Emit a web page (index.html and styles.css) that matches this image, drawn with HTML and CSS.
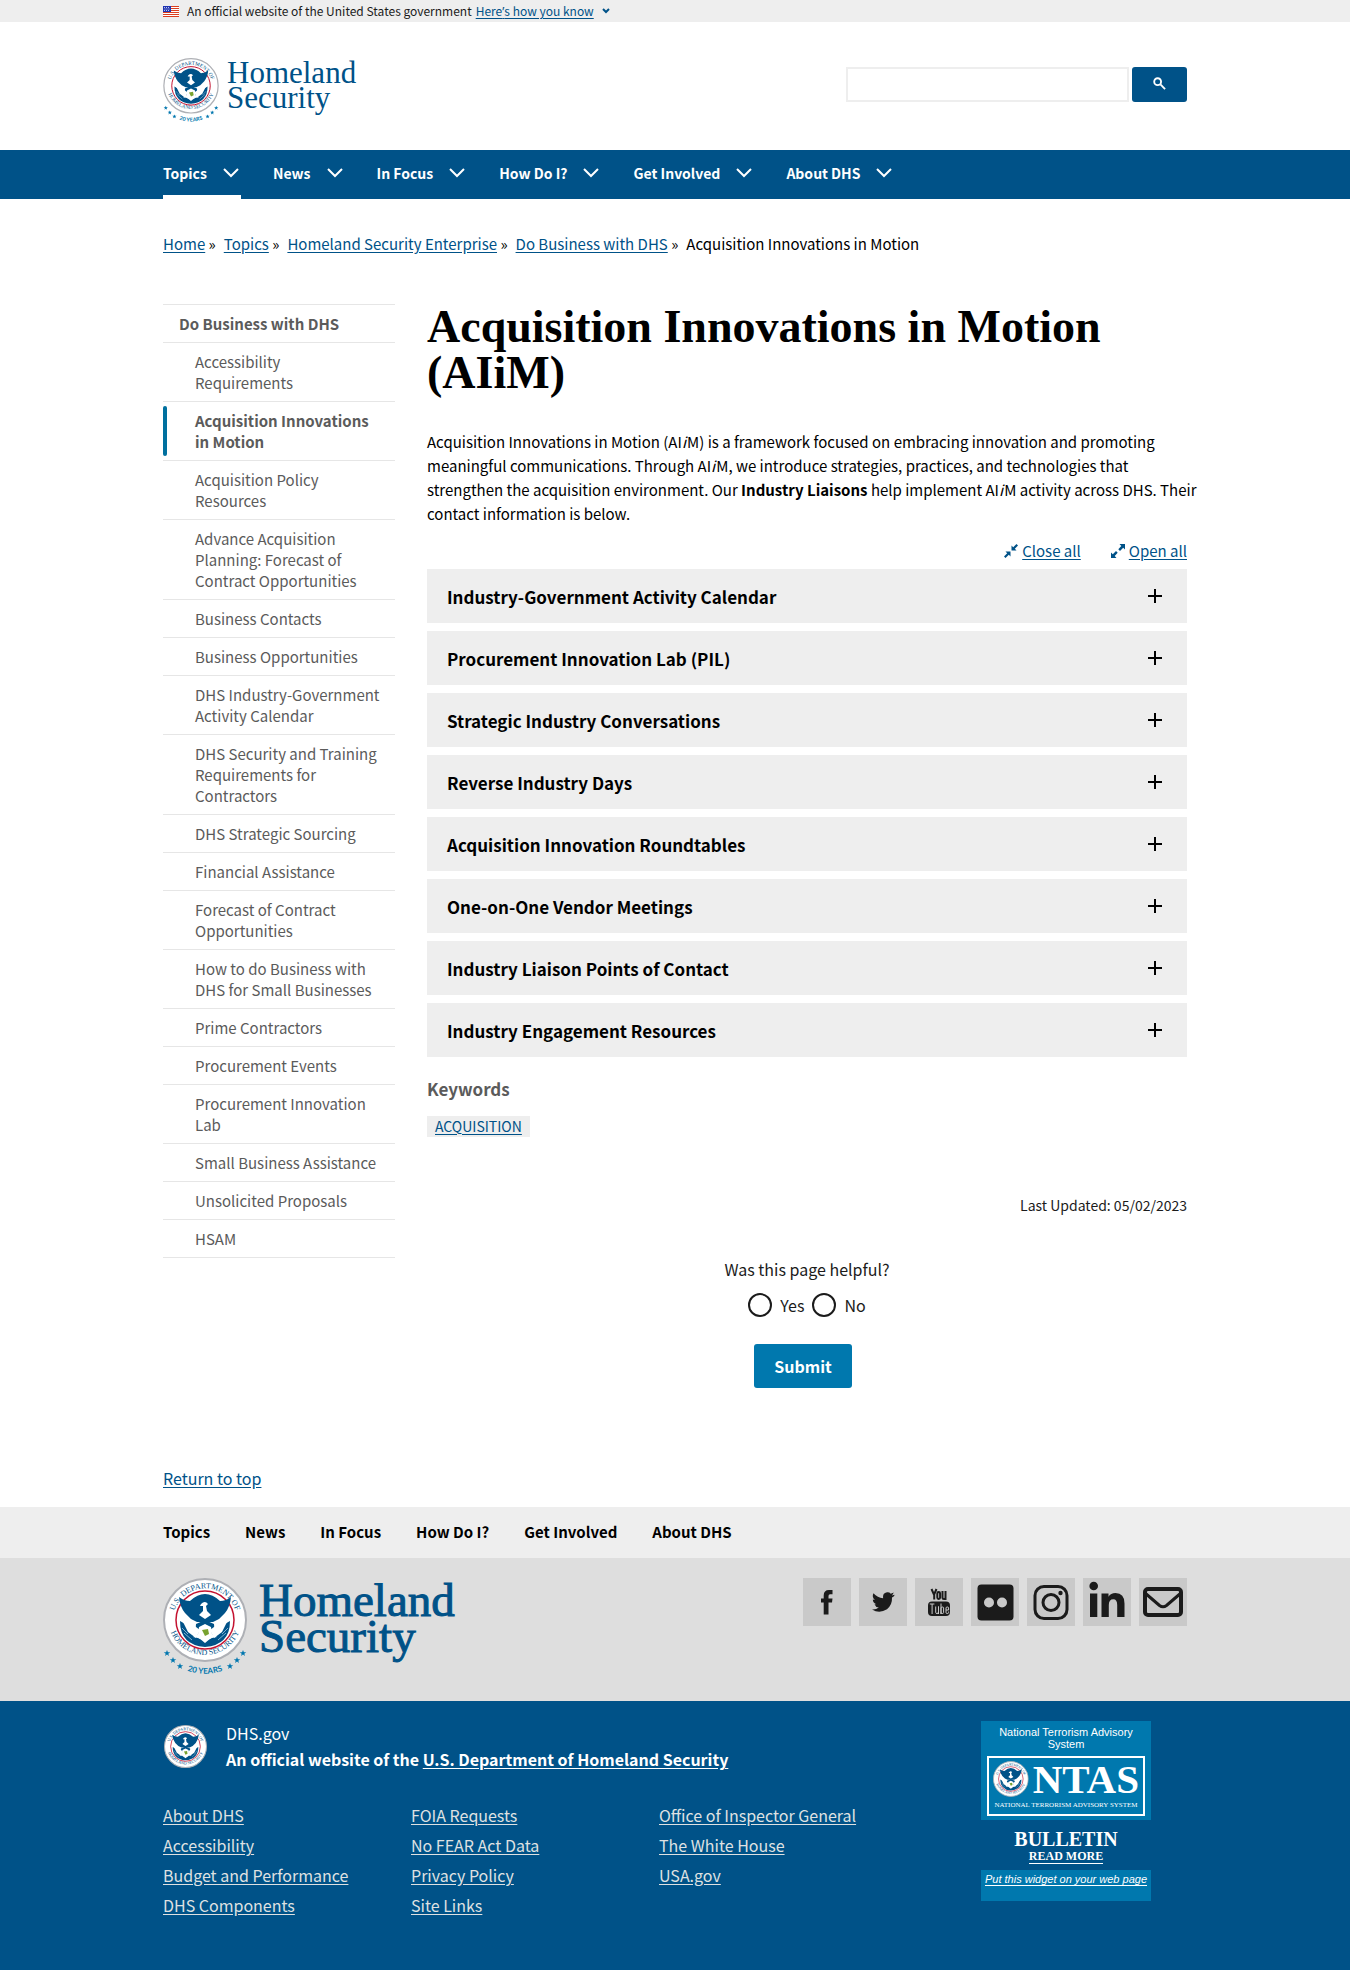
FILE: index.html
```html
<!DOCTYPE html>
<html lang="en">
<head>
<meta charset="utf-8">
<meta name="viewport" content="width=device-width, initial-scale=1">
<title>Acquisition Innovations in Motion (AIiM) | Homeland Security</title>
<link rel="stylesheet" href="styles.css">
</head>
<body id="top">
<svg class="defs" aria-hidden="true">
  <symbol id="seal" viewBox="0 0 84 84">
    <circle cx="42" cy="42" r="41" fill="#fff" stroke="#aeb0b5" stroke-width="2"/>
    <path id="arc-top" d="M10.500 48A32 32 0 1 1 73.500 48" fill="none"/>
    <path id="arc-bottom" d="M5 40A37 37 0 0 0 79 40" fill="none"/>
    <text class="seal-text"><textPath href="#arc-top" startOffset="50%">U.S. DEPARTMENT OF</textPath></text>
    <text class="seal-text"><textPath href="#arc-bottom" startOffset="50%">HOMELAND SECURITY</textPath></text>
    <circle cx="42" cy="42" r="29" fill="#fff" stroke="#c41230" stroke-width="1.500"/>
    <path d="M16 19Q21 23 27 23Q42 9 57 23Q63 23 68 19Q67 29 62 35L56 41L50 44H34L28 41L22 35Q17 29 16 19Z" fill="#005288"/>
    <path d="M38 26Q42 22 45 26L43 28L44 33L48 37L42 41L36 37L40 33V28L37 28Z" fill="#fff"/>
    <path d="M17 43Q17 67 42 69Q67 67 67 43L60 47L52 58Q42 66 32 58L24 47Z" fill="#005288"/>
    <path d="M33 46L42 42L51 46L52 57Q42 65 32 57Z" fill="#005288"/>
    <path d="M17 38L26 42L33 49L37 52L33 60L25 54ZM67 38L58 42L51 49L47 52L51 60L59 54Z" fill="#fff"/>
    <path d="M36 49L42 46L48 49L49 56L54 59L48 60L42 65L36 60L30 59L35 56Z" fill="#fff"/>
    <path d="M39 52L45 51L46 56L42 58Z" fill="#78a22f"/>
    <path d="M21 55L29 62M19 50L25 56M63 55L55 62M65 50L59 56" stroke="#7fb0d0" stroke-width="1"/>
  </symbol>
  <symbol id="anniversary" viewBox="0 0 84 98">
    <use href="#seal" width="84" height="84"/>
    <path id="arc-years" d="M-2 73A54 54 0 0 0 86 73" fill="none"/>
    <g fill="#0076ae">
      <path id="star" d="M4 72L4.900 74.200H7.200L5.300 75.700L6 78L4 76.600L2 78L2.700 75.700L.8 74.200H3.100Z"/>
      <use href="#star" x="6" y="7"/><use href="#star" x="13" y="13"/>
      <use href="#star" x="63" y="13"/><use href="#star" x="70" y="7"/><use href="#star" x="76"/>
      <text class="years-text"><textPath href="#arc-years" startOffset="50%">20 YEARS</textPath></text>
    </g>
  </symbol>
  <symbol id="chevron" viewBox="0 0 16 10"><path d="M1 1L8 8L15 1" fill="none" stroke="currentColor" stroke-width="2"/></symbol>
  <symbol id="plus" viewBox="0 0 14 14"><path d="M7 0V14M0 7H14" stroke="#000" stroke-width="2"/></symbol>
</svg>

<div class="banner">
  <div class="container banner-row">
    <svg class="flag" viewBox="0 0 16 11" aria-hidden="true"><path fill="#fff" d="M0 0H16V11H0Z"/><path d="M0 .5H16M0 2.500H16M0 4.500H16M0 6.500H16M0 8.500H16M0 10.500H16" stroke="#db3e1f"/><path fill="#1e33b1" d="M0 0H8V6H0Z"/><path d="M1 1.500H7M1.500 3H7M1 4.500H7" stroke="#fff" stroke-width=".7" stroke-dasharray="1 1"/></svg>
    <span>An official website of the United States government</span>
    <a href="#how">Here<span class="apostrophe">’</span>s how you know</a>
    <svg class="banner-chevron" viewBox="0 0 8 6" aria-hidden="true"><path d="M1 1L4 4L7 1"/></svg>
  </div>
</div>

<header>
  <div class="container masthead">
    <a class="logo" href="#top"><svg class="logo-seal" aria-hidden="true"><use href="#anniversary"/></svg><span class="logo-name">Homeland<br>Security</span></a>
    <form class="search" role="search">
      <input type="search" aria-label="Search DHS.gov">
      <button type="button" aria-label="Search"><svg viewBox="0 0 14 14" aria-hidden="true"><circle cx="5" cy="5" r="3.700"/><path d="M8 8L13 13"/></svg></button>
    </form>
  </div>
  <nav class="primary" aria-label="Primary">
    <ul class="container">
      <li class="current"><a href="#topics">Topics<svg aria-hidden="true"><use href="#chevron"/></svg></a></li>
      <li><a href="#news">News<svg aria-hidden="true"><use href="#chevron"/></svg></a></li>
      <li><a href="#focus">In Focus<svg aria-hidden="true"><use href="#chevron"/></svg></a></li>
      <li><a href="#how-do-i">How Do I?<svg aria-hidden="true"><use href="#chevron"/></svg></a></li>
      <li><a href="#involved">Get Involved<svg aria-hidden="true"><use href="#chevron"/></svg></a></li>
      <li><a href="#about">About DHS<svg aria-hidden="true"><use href="#chevron"/></svg></a></li>
    </ul>
  </nav>
</header>

<div class="container">
  <nav aria-label="Breadcrumb">
    <ol class="breadcrumb">
      <li><a href="#home">Home</a> »</li>
      <li><a href="#topics">Topics</a> »</li>
      <li><a href="#enterprise">Homeland Security Enterprise</a> »</li>
      <li><a href="#business">Do Business with DHS</a> »</li>
      <li>Acquisition Innovations in Motion</li>
    </ol>
  </nav>

  <div class="columns">
    <nav class="sidenav" aria-label="Section">
      <a class="sidenav-title" href="#business">Do Business with DHS</a>
      <ul>
        <li><a href="#s1">Accessibility Requirements</a></li>
        <li><a class="active" href="#s2">Acquisition Innovations in Motion</a></li>
        <li><a href="#s3">Acquisition Policy Resources</a></li>
        <li><a href="#s4">Advance Acquisition Planning: Forecast of Contract Opportunities</a></li>
        <li><a href="#s5">Business Contacts</a></li>
        <li><a href="#s6">Business Opportunities</a></li>
        <li><a href="#s7">DHS Industry-Government Activity Calendar</a></li>
        <li><a href="#s8">DHS Security and Training Requirements for Contractors</a></li>
        <li><a href="#s9">DHS Strategic Sourcing</a></li>
        <li><a href="#s10">Financial Assistance</a></li>
        <li><a href="#s11">Forecast of Contract Opportunities</a></li>
        <li><a href="#s12">How to do Business with DHS for Small Businesses</a></li>
        <li><a href="#s13">Prime Contractors</a></li>
        <li><a href="#s14">Procurement Events</a></li>
        <li><a href="#s15">Procurement Innovation Lab</a></li>
        <li><a href="#s16">Small Business Assistance</a></li>
        <li><a href="#s17">Unsolicited Proposals</a></li>
        <li><a href="#s18">HSAM</a></li>
      </ul>
    </nav>

    <main>
      <h1>Acquisition Innovations in Motion (AIiM)</h1>
      <p class="intro">Acquisition Innovations in Motion (AI<em>i</em>M) is a framework focused on embracing innovation and promoting meaningful communications. Through AI<em>i</em>M, we introduce strategies, practices, and technologies that strengthen the acquisition environment. Our <strong>Industry Liaisons</strong> help implement AI<em>i</em>M activity across DHS. Their contact information is below.</p>
      <div class="toggle-all">
        <a href="#close"><svg viewBox="0 0 14 14" aria-hidden="true"><path d="M7.500 1.500V6.500H12.500L10.800 4.800L14 1.500L12.500 0L9.200 3.200ZM6.500 12.500V7.500H1.500L3.200 9.200L0 12.500L1.500 14L4.800 10.800Z"/></svg><span>Close all</span></a>
        <a href="#open"><svg viewBox="0 0 14 14" aria-hidden="true"><path d="M8.500 0H14V5.500L12.200 3.800L9 7L7.300 5.200L10.300 1.900ZM5.500 14H0V8.500L1.800 10.200L5 7L6.700 8.800L3.700 12.100Z"/></svg><span>Open all</span></a>
      </div>
      <div class="accordion">
        <button type="button" aria-expanded="false">Industry-Government Activity Calendar<svg aria-hidden="true"><use href="#plus"/></svg></button>
        <button type="button" aria-expanded="false">Procurement Innovation Lab (PIL)<svg aria-hidden="true"><use href="#plus"/></svg></button>
        <button type="button" aria-expanded="false">Strategic Industry Conversations<svg aria-hidden="true"><use href="#plus"/></svg></button>
        <button type="button" aria-expanded="false">Reverse Industry Days<svg aria-hidden="true"><use href="#plus"/></svg></button>
        <button type="button" aria-expanded="false">Acquisition Innovation Roundtables<svg aria-hidden="true"><use href="#plus"/></svg></button>
        <button type="button" aria-expanded="false">One-on-One Vendor Meetings<svg aria-hidden="true"><use href="#plus"/></svg></button>
        <button type="button" aria-expanded="false">Industry Liaison Points of Contact<svg aria-hidden="true"><use href="#plus"/></svg></button>
        <button type="button" aria-expanded="false">Industry Engagement Resources<svg aria-hidden="true"><use href="#plus"/></svg></button>
      </div>
      <h2>Keywords</h2>
      <ul class="tags"><li><a href="#acquisition">ACQUISITION</a></li></ul>
      <p class="updated">Last Updated: 05/02/2023</p>
      <form class="feedback">
        <fieldset>
          <legend>Was this page helpful?</legend>
          <div class="choices">
            <label><input type="radio" name="helpful" value="yes">Yes</label>
            <label><input type="radio" name="helpful" value="no">No</label>
          </div>
        </fieldset>
        <button type="button">Submit</button>
      </form>
    </main>
  </div>
  <p class="return"><a href="#top">Return to top</a></p>
</div>

<footer>
  <nav class="footer-nav" aria-label="Footer">
    <ul class="container">
      <li><a href="#topics">Topics</a></li>
      <li><a href="#news">News</a></li>
      <li><a href="#focus">In Focus</a></li>
      <li><a href="#how-do-i">How Do I?</a></li>
      <li><a href="#involved">Get Involved</a></li>
      <li><a href="#about">About DHS</a></li>
    </ul>
  </nav>
  <div class="footer-brand">
    <div class="container footer-brand-row">
      <a class="logo logo-large" href="#top"><svg class="logo-seal" aria-hidden="true"><use href="#anniversary"/></svg><span class="logo-name">Homeland<br>Security</span></a>
      <ul class="social">
        <li><a href="#facebook" aria-label="Facebook"><svg viewBox="0 0 48 48"><path d="M29.500 12V16.300H27Q25.500 16.300 25.500 18V20.500H29.500L29 24.500H25.500V36.500H20.700V24.500H18V20.500H20.700V17.500Q20.700 12 26 12Z"/></svg></a></li>
        <li><a href="#twitter" aria-label="Twitter"><svg viewBox="0 0 48 48"><path d="M35.500 17.200Q34.500 18.800 33 19.600Q33.400 27 28 31.200Q20.500 36 13 31.500Q17 31.800 19.800 29.600Q16.500 29.200 15.500 26.300L17.500 26.200Q14 25 13.800 21.400L15.900 22Q12.500 19 14.500 15.300Q18.500 20 24.100 20.300Q23.300 15 28 14.300Q30.300 14 31.800 15.700L34.700 14.600Q34.200 16.400 32.900 17.400L35.500 16.800Z"/></svg></a></li>
        <li><a href="#youtube" aria-label="YouTube"><svg viewBox="0 0 48 48"><path d="M16.500 11L19.200 17V21.500M21.500 11L18.900 17" class="line-thin"/><rect x="22.300" y="14" width="2.800" height="7" rx="1.400" class="line-thin"/><path d="M27.500 13V19.500Q27.500 21 29 21Q30.500 21 30.500 19.500V13V22" class="line-thin"/><rect x="13" y="23.500" width="22" height="14.500" rx="4"/><g class="line-light"><path d="M14.800 26H19.400M17.100 26V36"/><path d="M20.700 28.500V34.500Q20.700 35.500 22 35.500Q23.500 35.500 23.500 34V28.500V36"/><path d="M26 25.500V36V30Q26 29 27.300 29Q28.600 29 28.600 30V34.500Q28.600 35.500 27.300 35.500Q26 35.500 26 34.500"/><path d="M31 32H33.600V30Q33.600 29 32.300 29Q31 29 31 30V34.500Q31 35.500 32.300 35.500Q33.600 35.500 33.600 34.500V33.500"/></g></svg></a></li>
        <li><a href="#flickr" aria-label="Flickr"><svg viewBox="0 0 48 48"><rect x="6.500" y="6.500" width="36" height="36" rx="4"/><g fill="#c9c9c9"><circle cx="18" cy="24.500" r="5"/><circle cx="31" cy="24.500" r="5"/></g></svg></a></li>
        <li><a href="#instagram" aria-label="Instagram"><svg viewBox="0 0 48 48"><rect x="8" y="8.500" width="32" height="32" rx="9" class="line"/><circle cx="24" cy="24.500" r="8" class="line"/><circle cx="33.500" cy="15" r="2.200"/></svg></a></li>
        <li><a href="#linkedin" aria-label="LinkedIn"><svg viewBox="0 0 48 48"><circle cx="10.700" cy="8" r="4.300"/><path d="M7 15.500H14.300V39H7ZM18.500 15.500H25.500V18.700Q27.700 15 32.500 15Q41.500 15 41.500 25.500V39H34.200V27Q34.200 21.300 30.300 21.300Q25.800 21.300 25.800 27V39H18.500Z"/></svg></a></li>
        <li><a href="#email" aria-label="Email"><svg viewBox="0 0 48 48"><rect x="6" y="11" width="36" height="26" rx="3" class="line-thick"/><path d="M6 15L20.500 27.500Q24 30 27.500 27.500L42 15" class="line"/></svg></a></li>
      </ul>
    </div>
  </div>
  <div class="footer-base">
    <div class="container footer-base-row">
      <div class="footer-main">
        <div class="identity">
          <svg aria-hidden="true"><use href="#seal"/></svg>
          <div><p>DHS.gov</p><p><strong>An official website of the <a href="#dhs">U.S. Department of Homeland Security</a></strong></p></div>
        </div>
        <ul class="footer-links">
          <li><a href="#f1">About DHS</a></li>
          <li><a href="#f2">Accessibility</a></li>
          <li><a href="#f3">Budget and Performance</a></li>
          <li><a href="#f4">DHS Components</a></li>
          <li><a href="#f5">FOIA Requests</a></li>
          <li><a href="#f6">No FEAR Act Data</a></li>
          <li><a href="#f7">Privacy Policy</a></li>
          <li><a href="#f8">Site Links</a></li>
          <li><a href="#f9">Office of Inspector General</a></li>
          <li><a href="#f10">The White House</a></li>
          <li><a href="#f11">USA.gov</a></li>
        </ul>
      </div>
      <aside class="ntas">
        <div class="ntas-head">
          <p>National Terrorism Advisory System</p>
          <div class="ntas-box">
            <div class="ntas-name"><svg aria-hidden="true"><use href="#seal"/></svg><span>NTAS</span></div>
            <small>NATIONAL TERRORISM ADVISORY SYSTEM</small>
          </div>
        </div>
        <a class="ntas-bulletin" href="#bulletin"><strong>BULLETIN</strong><span>READ MORE</span></a>
        <a class="ntas-widget" href="#widget">Put this widget on your web page</a>
      </aside>
    </div>
  </div>
</footer>
</body>
</html>
```
FILE: styles.css
```css
:root {
  --blue: #005288;
  --bright: #0078ae;
  --ink: #1b1b1b;
  --pale: #eee;
  --sans: "Noto Sans CJK SC", "Source Sans Pro", sans-serif;
  --serif: "Liberation Serif", serif;
}

* { box-sizing: border-box; }

body {
  margin: 0;
  background: #fff;
  color: #000;
  font: 15px/24px var(--sans);
}

a { color: var(--blue); text-underline-offset: 2px; }
ul, ol { list-style: none; margin: 0; padding: 0; }
p { margin: 0; }
em { padding-right: 1px; }
button { font-family: inherit; border: 0; cursor: pointer; }

.defs { display: none; }
.seal-text { font: 8px var(--serif); fill: var(--blue); text-anchor: middle; }
.years-text { font: bold 8px "Lato", sans-serif; text-anchor: middle; }

.container { max-width: 1088px; margin: 0 auto; padding: 0 32px; }

/* Government banner */
.banner { background: var(--pale); font-size: 12px; line-height: 22px; color: var(--ink); }
.banner-row { display: flex; align-items: center; gap: 8px; }
.banner-row > span { margin-right: -4px; }
.apostrophe { font-family: "Noto Sans", sans-serif; line-height: 1; }
.flag { width: 16px; height: 11px; }
.banner-chevron { width: 8px; height: 6px; fill: none; stroke: var(--blue); stroke-width: 2; }

/* Masthead */
.masthead { display: flex; justify-content: space-between; align-items: flex-start; padding-top: 36px; padding-bottom: 27px; }
.logo { display: flex; gap: 8px; text-decoration: none; }
.logo-seal { width: 56px; height: 65px; }
.logo-name { font: 31px/25px var(--serif); padding-top: 2px; }
.search { display: flex; gap: 3px; margin-top: 9px; }
.search input { width: 283px; height: 35px; border: 2px solid #eee; padding: 0 8px; font: inherit; }
.search button { width: 55px; height: 35px; border-radius: 3px; background: var(--blue); }
.search svg { width: 13px; height: 13px; fill: none; stroke: #fff; stroke-width: 2; }

/* Primary navigation */
.primary { background: var(--blue); }
.primary ul { display: flex; gap: 32px; }
.primary a { display: flex; align-items: center; gap: 16px; height: 49px; padding-right: 2px; border: solid transparent; border-width: 0 0 4px; color: #fff; font-size: 14px; font-weight: bold; text-decoration: none; }
.primary .current a { border-color: #fff; }
.primary svg { width: 16px; height: 10px; }

/* Breadcrumb */
.breadcrumb { display: flex; flex-wrap: wrap; gap: 0 8px; padding: 33px 0 35px; }

/* Two-column body */
.columns { display: grid; grid-template-columns: 232px minmax(0, 1fr); gap: 32px; padding-top: 13px; }
.sidenav { line-height: 21px; border-top: 1px solid #e6e6e6; align-self: start; }
.sidenav a { display: block; color: #5b5b5b; text-decoration: none; }
.sidenav .sidenav-title { padding: 8px 16px; font-weight: bold; }
.sidenav li { border-top: 1px solid #e6e6e6; }
.sidenav ul { border-bottom: 1px solid #e6e6e6; }
.sidenav li a { position: relative; padding: 8px 14px 8px 32px; }
.sidenav .active { font-weight: bold; }
.sidenav .active::before { content: ""; position: absolute; left: 0; top: 4px; bottom: 4px; width: 4px; border-radius: 4px; background: #00709f; }

h1 { margin: 0 0 34px; font: bold 46px/46px var(--serif); }
.intro { margin-right: -16px; }
.toggle-all { display: flex; justify-content: flex-end; gap: 30px; margin: 13px 0 6px; }
.toggle-all a { display: flex; align-items: center; gap: 4px; text-decoration: none; }
.toggle-all span { text-decoration: underline; }
.toggle-all svg { width: 14px; height: 14px; fill: var(--blue); }

.accordion { display: grid; gap: 8px; }
.accordion button { display: flex; justify-content: space-between; align-items: center; height: 54px; padding: 0 25px 0 20px; background: var(--pale); color: #000; font-size: 17px; font-weight: bold; text-align: left; }
.accordion svg { width: 14px; height: 14px; }

h2 { margin: 20px 0 15px; font-size: 17px; line-height: 24px; color: #5b5b5b; }
.tags a { display: inline-block; padding: 0 8px; background: var(--pale); font-size: 14px; line-height: 21px; }
.tags li { display: flex; }
.updated { margin-top: 56px; text-align: right; font-size: 14px; color: var(--ink); }

.feedback { display: flex; flex-direction: column; align-items: center; margin-top: 40px; color: var(--ink); font-size: 16px; }
.feedback fieldset { margin: 0; padding: 0; border: 0; }
.feedback legend { padding: 0; }
.choices { display: flex; justify-content: center; gap: 8px; margin-top: 12px; }
.choices label { display: flex; align-items: center; gap: 8px; }
.choices input { appearance: none; width: 24px; height: 24px; margin: 0; border: 2px solid var(--ink); border-radius: 50%; background: #fff; }
.choices input:checked { background: var(--bright); box-shadow: inset 0 0 0 4px #fff; }
.feedback button { margin: 27px 8px 0 0; padding: 10px 20px; border-radius: 3px; background: var(--bright); color: #fff; font-size: 16px; line-height: 24px; font-weight: bold; }

.return { margin-top: 78px; padding-bottom: 17px; font-size: 16px; }

/* Footer */
footer { font-size: 16px; }
.footer-nav { background: var(--pale); font-size: 15px; }
.footer-nav ul { display: flex; gap: 35px; padding-top: 13px; padding-bottom: 14px; }
.footer-nav a { color: #000; font-weight: bold; text-decoration: none; }
.footer-brand { background: #dedede; }
.footer-brand-row { display: flex; justify-content: space-between; align-items: flex-start; padding-top: 20px; padding-bottom: 25px; }
.logo-large { gap: 12px; }
.logo-large .logo-seal { width: 84px; height: 98px; }
.logo-large .logo-name { font-size: 47px; line-height: 36px; padding-top: 4px; -webkit-text-stroke: 1px var(--blue); }
.social { display: flex; gap: 8px; }
.social a { display: block; width: 48px; height: 48px; background: #c9c9c9; }
.social svg { display: block; fill: #1b1b1b; }
.social .line, .social .line-thin, .social .line-thick { fill: none; stroke: #1b1b1b; stroke-width: 3; }
.social .line-thin { stroke-width: 2; }
.social .line-thick { stroke-width: 4; }
.social .line-light { fill: none; stroke: #c9c9c9; stroke-width: 1; }

.footer-base { background: var(--blue); color: #fff; }
.footer-base-row { display: flex; justify-content: space-between; padding-top: 20px; padding-bottom: 69px; }
.footer-main { flex: 1; max-width: 744px; }
.identity { display: flex; gap: 19px; margin-top: -1px; line-height: 26px; }
.identity svg { width: 43px; height: 43px; margin: 5px 0 0 1px; }
.identity a { color: #fff; }
.footer-links { display: grid; grid-template-rows: repeat(4, 30px); grid-auto-flow: column; grid-auto-columns: 1fr; margin-top: 28px; line-height: 30px; }
.footer-links a { color: #dfe1e2; }

.ntas { width: 170px; margin-right: 36px; text-align: center; font-family: "Liberation Sans", sans-serif; }
.ntas-head { background: var(--bright); padding: 5px 6px 4px; font-size: 11px; line-height: 12px; }
.ntas-box { margin-top: 6px; padding: 2px 4px; border: 2px solid #fff; font-family: var(--serif); }
.ntas-name { display: flex; align-items: center; justify-content: center; gap: 4px; }
.ntas-name svg { width: 36px; height: 36px; }
.ntas-name span { font: bold 41px/38px var(--serif); }
.ntas small { display: block; font-size: 7px; line-height: 14px; white-space: nowrap; }
.ntas-bulletin { display: flex; flex-direction: column; align-items: center; padding: 8px 0 6px; color: #fff; text-decoration: none; font-family: var(--serif); font-weight: bold; }
.ntas-bulletin strong { font-size: 20px; line-height: 22px; }
.ntas-bulletin span { font-size: 12px; line-height: 13px; border-bottom: 1px solid #fff; }
.ntas-widget { display: block; height: 31px; background: var(--bright); color: #fff; font-size: 11px; line-height: 18px; font-style: italic; white-space: nowrap; }
```
